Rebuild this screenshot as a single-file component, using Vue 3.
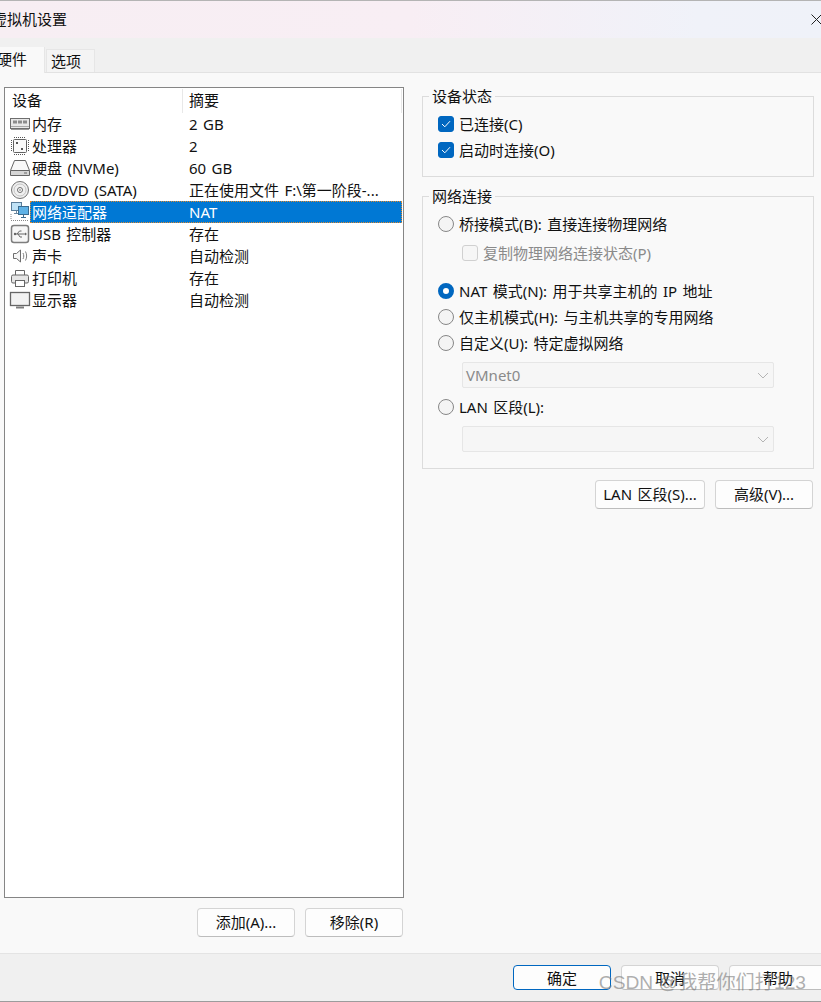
<script setup>
const rows = [
  { icon: 'memory', name: '内存', value: '2 GB' },
  { icon: 'cpu', name: '处理器', value: '2' },
  { icon: 'disk', name: '硬盘 (NVMe)', value: '60 GB' },
  { icon: 'cd', name: 'CD/DVD (SATA)', value: '正在使用文件 F:\\第一阶段-...' },
  { icon: 'net', name: '网络适配器', value: 'NAT', selected: true },
  { icon: 'usb', name: 'USB 控制器', value: '存在' },
  { icon: 'sound', name: '声卡', value: '自动检测' },
  { icon: 'printer', name: '打印机', value: '存在' },
  { icon: 'display', name: '显示器', value: '自动检测' }
]
</script>

<template>
  <div class="window">
    <header class="titlebar">
      <span class="title">虚拟机设置</span>
      <svg class="close" width="11" height="11" viewBox="0 0 11 11"><path d="M.5.5l10 10M10.5.5l-10 10" stroke="#222" stroke-width="1" fill="none"/></svg>
    </header>

    <nav class="tabs">
      <div class="tab active"><span>硬件</span></div>
      <div class="tab"><span>选项</span></div>
    </nav>

    <main class="content">
      <section class="left">
        <div class="list">
          <div class="list-head">
            <span class="h-name">设备</span>
            <span class="h-value">摘要</span>
          </div>
          <div v-for="r in rows" :key="r.name" class="row" :class="{ selected: r.selected }">
            <span class="ico">
              <svg width="22" height="22" viewBox="0 0 22 22" fill="none">
                <template v-if="r.icon === 'memory'">
                  <rect x="1.5" y="5.5" width="19" height="10" fill="#e8e8e8" stroke="#6e6e6e"/>
                  <rect x="4" y="7.500" width="4" height="3" fill="#8c8c8c"/><rect x="9" y="7.500" width="4" height="3" fill="#8c8c8c"/><rect x="14" y="7.500" width="4" height="3" fill="#8c8c8c"/>
                  <path d="M2 13.500h18" stroke="#a8a8a8"/>
                  <path d="M2 16.500h18" stroke="#999"/>
                </template>
                <template v-else-if="r.icon === 'cpu'">
                  <rect x="4.500" y="4.500" width="13" height="13" rx="1" fill="#fafafa" stroke="#626262"/>
                  <path d="M5 2.500h12M5 19.500h12M2.500 5v12M19.500 5v12" stroke="#555" stroke-dasharray="1 1"/>
                  <rect x="7" y="7" width="2" height="2" fill="#555"/><rect x="12" y="13" width="2" height="2" fill="#555"/>
                </template>
                <template v-else-if="r.icon === 'disk'">
                  <path d="M1.500 13.500L5.500 3.500h11l4 10v5h-19z" fill="#f8f8f8" stroke="#666"/>
                  <path d="M2 14h18v4H2z" fill="#d6d6d6"/>
                  <path d="M1.500 13.500h19" stroke="#666"/>
                  <path d="M15 16h3" stroke="#666"/>
                </template>
                <template v-else-if="r.icon === 'cd'">
                  <circle cx="11" cy="11" r="8.500" fill="#f0f0f0" stroke="#737373"/>
                  <circle cx="11" cy="11" r="6" stroke="#c4c4c4"/>
                  <circle cx="11" cy="11" r="2.500" fill="#fff" stroke="#6e6e6e"/>
                  <circle cx="11" cy="11" r=".8" fill="#666"/>
                </template>
                <template v-else-if="r.icon === 'net'">
                  <rect x="2.500" y="1.500" width="10" height="8" fill="#bfe2f6" stroke="#5a7d99"/>
                  <path d="M7.500 10v2M5 12.500h5" stroke="#6f8aa0"/>
                  <rect x="9.500" y="5.500" width="10" height="8" fill="#5fb2e6" stroke="#3c6c90"/>
                  <path d="M14.500 14v2M12 16.500h5" stroke="#3c6c90"/>
                  <path d="M2 19.500h18M2 13v6" stroke="#888" stroke-dasharray="1 1"/>
                </template>
                <template v-else-if="r.icon === 'usb'">
                  <rect x="2.500" y="2.500" width="17" height="17" rx="2.500" fill="#f7f7f7" stroke="#7e7e7e" stroke-width="1.500"/>
                  <path d="M6 11h10M8 11l2.500-3h2M9 11l2 3h2" stroke="#666"/>
                  <path d="M16 9.500l2 1.500-2 1.500z" fill="#666"/>
                  <circle cx="6" cy="11" r="1.200" fill="#666"/>
                </template>
                <template v-else-if="r.icon === 'sound'">
                  <path d="M4.500 8.500h3l4-3.500v12l-4-3.500h-3z" fill="#f6f6f6" stroke="#6e6e6e"/>
                  <path d="M14 8c1 2 1 4 0 6M16.500 6.500c1.500 3 1.500 6 0 9" stroke="#808080"/>
                </template>
                <template v-else-if="r.icon === 'printer'">
                  <path d="M6.500 8V3.500h9V8" fill="#fff" stroke="#666"/>
                  <rect x="2.500" y="8" width="17" height="8" rx="1.500" fill="#e6e6e6" stroke="#666"/>
                  <rect x="6.500" y="13.500" width="9" height="6" fill="#fff" stroke="#666"/>
                </template>
                <template v-else>
                  <rect x="1.500" y="3.500" width="19" height="13" fill="#f2f2f2" stroke="#666" stroke-width="1.300"/>
                  <path d="M7 18.500h8" stroke="#7e7e7e" stroke-width="2"/>
                </template>
              </svg>
            </span>
            <span class="cell-wrap">
              <span class="c-name">{{ r.name }}</span>
              <span class="c-value">{{ r.value }}</span>
            </span>
          </div>
        </div>
        <div class="list-actions">
          <button class="btn">添加(A)...</button>
          <button class="btn">移除(R)</button>
        </div>
      </section>

      <section class="right">
        <div class="group g-status">
          <span class="legend">设备状态</span>
          <label class="line"><span class="check on"><svg width="10" height="8" viewBox="0 0 10 8"><path d="M1 4l2.800 2.800L9 1.200" stroke="#fff" fill="none"/></svg></span>已连接(C)</label>
          <label class="line"><span class="check on"><svg width="10" height="8" viewBox="0 0 10 8"><path d="M1 4l2.800 2.800L9 1.200" stroke="#fff" fill="none"/></svg></span>启动时连接(O)</label>
        </div>

        <div class="group g-net">
          <span class="legend">网络连接</span>
          <label class="line"><span class="radio"></span>桥接模式(B): 直接连接物理网络</label>
          <label class="line sub dim s-copy"><span class="check"></span>复制物理网络连接状态(P)</label>
          <label class="line s-nat"><span class="radio on"></span>NAT 模式(N): 用于共享主机的 IP 地址</label>
          <label class="line"><span class="radio"></span>仅主机模式(H): 与主机共享的专用网络</label>
          <label class="line"><span class="radio"></span>自定义(U): 特定虚拟网络</label>
          <div class="select"><span>VMnet0</span><svg width="12" height="7" viewBox="0 0 12 7"><path d="M1 1l5 5 5-5" stroke="#b4b4b4" fill="none"/></svg></div>
          <label class="line s-lan"><span class="radio"></span>LAN 区段(L):</label>
          <div class="select"><span></span><svg width="12" height="7" viewBox="0 0 12 7"><path d="M1 1l5 5 5-5" stroke="#b4b4b4" fill="none"/></svg></div>
        </div>

        <div class="net-actions">
          <button class="btn lan">LAN 区段(S)...</button>
          <button class="btn">高级(V)...</button>
        </div>
      </section>
    </main>

    <footer class="footer">
      <button class="btn small primary">确定</button>
      <button class="btn small">取消</button>
      <button class="btn small">帮助</button>
    </footer>

    <span class="watermark">CSDN @我帮你们打123</span>
  </div>
</template>

<style scoped>
.window {
  position: relative;
  width: 821px;
  height: 1002px;
  overflow: hidden;
  display: flex;
  flex-direction: column;
  box-sizing: border-box;
  background: #f9f9f9;
  border-top: 1px solid #b4b4b4;
  border-bottom: 1px solid #9c9c9c;
  font-family: "Noto Sans", "Noto Sans CJK SC", sans-serif;
  font-size: 15px;
  word-spacing: 1.5px;
  line-height: 22px;
  color: #111;
}
.titlebar {
  height: 37px;
  flex: none;
  box-sizing: border-box;
  padding-bottom: 1px;
  display: flex;
  align-items: center;
  justify-content: space-between;
  background: linear-gradient(90deg, #f7eef3 0%, #f8eef4 50%, #f0f2f9 85%, #eff2f9 100%);
}
.title { margin-left: -8px; }
.close { margin-right: -1px; }
.tabs {
  height: 35px;
  flex: none;
  box-sizing: border-box;
  display: flex;
  align-items: flex-end;
  gap: 1px;
  background: #f0f0f0;
  border-bottom: 1px solid #e2e2e2;
}
.tab {
  box-sizing: border-box;
  width: 49px;
  height: 23px;
  border: 1px solid #e6e6e6;
  border-bottom: none;
  background: #f4f4f4;
  padding-left: 4px;
  line-height: 22px;
}
.tab.active {
  width: 45px;
  height: 26px;
  margin-bottom: -1px;
  border: none;
  border-right: 1px solid #e6e6e6;
  background: #f9f9f9;
  padding-left: 0;
  line-height: 24px;
}
.tab.active span { margin-left: -3px; display: block; }
.content {
  flex: 1;
  display: flex;
  padding: 14px 0 0 4px;
  min-height: 0;
}
.left { width: 400px; flex: none; }
.list {
  box-sizing: border-box;
  height: 811px;
  background: #fff;
  border: 1px solid #858585;
  padding: 1px;
}
.list-head {
  display: flex;
  height: 24px;
  line-height: 22px;
}
.h-name {
  width: 177px;
  box-sizing: border-box;
  padding-left: 6px;
  border-right: 1px solid #e8e8e8;
  margin-right: 6px;
}
.h-value { flex: 1; border-right: 1px solid #e8e8e8; }
.row { display: flex; height: 22px; }
.ico { width: 22px; margin-left: 2px; flex: none; height: 22px; }
.ico svg { display: block; margin-left: 1px; }
.cell-wrap {
  flex: 1;
  display: flex;
  box-sizing: border-box;
  padding-left: 1px;
  border: 1px solid transparent;
  line-height: 20px;
}
.c-name { width: 157px; flex: none; }
.c-value { flex: 1; white-space: nowrap; }
.row.selected .cell-wrap {
  background: #0078d4;
  color: #fff;
  border: 1px dotted #e08a2e;
}
.list-actions {
  display: flex;
  justify-content: flex-end;
  gap: 10px;
  margin-top: 10px;
  padding-right: 1px;
}
.btn {
  box-sizing: border-box;
  width: 98px;
  height: 29px;
  padding: 0 0 2px;
  border: 1px solid #d4d4d4;
  border-bottom-color: #bdbdbd;
  border-radius: 4px;
  background: #fdfdfd;
  font: inherit;
  word-spacing: inherit;
  color: #111;
  white-space: nowrap;
}
.btn.lan { width: 110px; }
.btn.small { height: 25px; line-height: 22px; padding: 0; }
.btn.primary { border: 1px solid #0067c0; }
.right { width: 392px; flex: none; margin-left: 18px; padding-top: 9px; }
.group {
  position: relative;
  box-sizing: border-box;
  border: 1px solid #dcdcdc;
  padding: 14px 0 0 15px;
}
.g-status { height: 81px; margin-bottom: 19px; }
.g-net { height: 273px; }
.legend {
  position: absolute;
  top: -11px;
  left: 6px;
  padding: 0 3px;
  background: #f9f9f9;
  line-height: 20px;
}
.line {
  display: flex;
  align-items: center;
  height: 26px;
  white-space: nowrap;
}
.check, .radio { flex: none; box-sizing: border-box; width: 16px; height: 16px; margin-right: 5px; }
.check {
  display: flex;
  align-items: center;
  justify-content: center;
  border-radius: 3px;
  border: 1px solid #d0d0d0;
  background: #f6f6f6;
}
.check.on { background: #0067c0; border-color: #0067c0; }
.radio {
  border-radius: 50%;
  border: 1px solid #878787;
  background: #f4f4f4;
}
.radio.on { border: 5px solid #0067c0; background: #fff; }
.sub { margin-left: 24px; }
.dim { color: #8a8a8a; }
.s-copy { margin-top: 3px; }
.s-nat { margin-top: 12px; }
.s-lan { margin-top: 6px; }
.select {
  box-sizing: border-box;
  width: 312px;
  height: 26px;
  margin: 6px 0 0 24px;
  padding: 0 4px 0 3px;
  display: flex;
  align-items: center;
  justify-content: space-between;
  border: 1px solid #e6e6e6;
  border-radius: 2px;
  background: #f6f6f6;
  color: #8a8a8a;
}
.net-actions {
  display: flex;
  justify-content: flex-end;
  gap: 10px;
  margin-top: 11px;
  padding-right: 1px;
}
.footer {
  height: 48px;
  flex: none;
  box-sizing: border-box;
  display: flex;
  justify-content: flex-end;
  gap: 10px;
  padding-top: 11px;
  margin-right: -6px;
  background: #f0f0f0;
  border-top: 1px solid #e4e4e4;
}
.watermark {
  position: absolute;
  right: 15px;
  bottom: 4px;
  font-size: 19.2px;
  line-height: 28px;
  word-spacing: 0;
  color: rgba(120, 120, 120, 0.6);
  white-space: nowrap;
  font-family: "Liberation Sans", "Noto Sans CJK SC", sans-serif;
}
</style>
